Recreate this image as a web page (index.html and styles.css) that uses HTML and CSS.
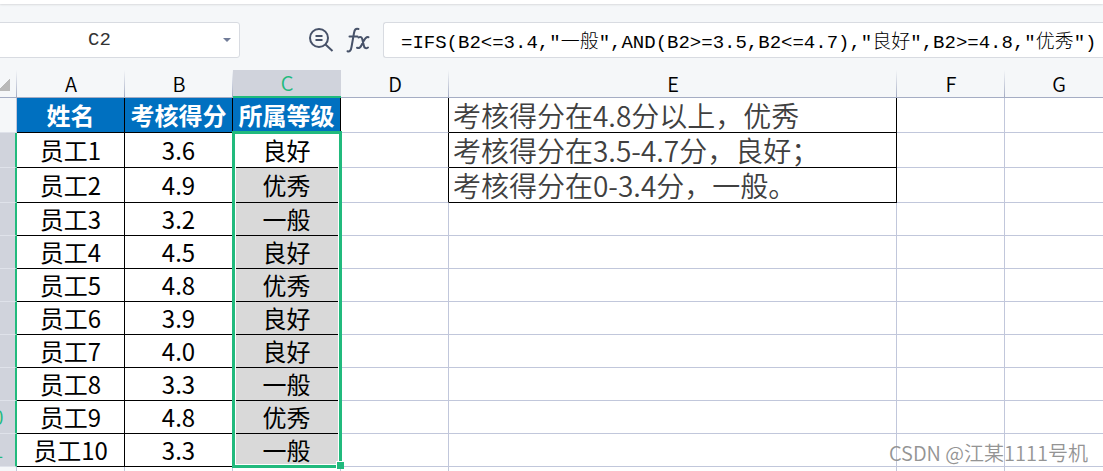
FILE: index.html
```html
<!DOCTYPE html>
<html lang="zh-CN">
<head>
  <meta charset="UTF-8">
  <meta name="viewport" content="width=device-width, initial-scale=1.0">
  <title>员工考核等级</title>
  <link rel="stylesheet" href="styles.css">
</head>
<body>
  <div class="ribbon"></div>

  <div class="formula-bar">
    <div class="name-box">
      <input type="text" value="C2" aria-label="名称框">
      <button type="button" aria-label="展开名称列表"><span class="arrow"></span></button>
    </div>
    <div class="tools">
      <button type="button" aria-label="查找">
        <svg width="26" height="26" viewBox="0 0 26 26" fill="none" stroke="#475269" stroke-width="2">
          <circle cx="11" cy="11" r="9"/>
          <path d="M7.500 9h7M7.500 13h7M17.500 17.500l7 6.500"/>
        </svg>
      </button>
      <button type="button" aria-label="插入函数">
        <svg width="24" height="26" viewBox="0 0 24 26" fill="none" stroke="#475269" stroke-width="2" stroke-linecap="round">
          <path d="M12.500 2C9.500 1 8.500 3 8 6L5.500 20C5 23.500 3.500 25 1.500 24.200M3.500 9.500h8"/>
          <path d="M12.500 10.500c2.500-1.500 3.500 0 4 2.500l1.200 5c.5 3 2 4 4.300 2.500M22.500 10.200c-2-.7-3.500 1-5 4l-2 4c-1.200 2.500-2.500 3.300-4.500 2.500"/>
        </svg>
      </button>
    </div>
    <input class="formula" type="text" aria-label="编辑栏" value='=IFS(B2&lt;=3.4,"一般",AND(B2&gt;=3.5,B2&lt;=4.7),"良好",B2&gt;=4.8,"优秀")'>
  </div>

  <div class="sheet">
    <table>
      <colgroup>
        <col class="col-num">
        <col class="col"><col class="col"><col class="col"><col class="col">
        <col class="col-wide">
        <col class="col"><col class="col">
        <col>
      </colgroup>
      <thead>
        <tr>
          <th class="corner"><span></span></th>
          <th>A</th><th>B</th><th class="active">C</th><th>D</th><th>E</th><th>F</th><th>G</th><th></th>
        </tr>
      </thead>
      <tbody>
        <tr class="tall">
          <th>1</th>
          <td class="title">姓名</td><td class="title">考核得分</td><td class="title">所属等级</td>
          <td class="before-note"></td><td class="note">考核得分在4.8分以上，优秀</td><td></td><td></td><td></td>
        </tr>
        <tr class="tall picked">
          <th>2</th>
          <td class="data">员工1</td><td class="data">3.6</td><td class="data current">良好<div class="selection"></div></td>
          <td class="before-note"></td><td class="note">考核得分在3.5-4.7分，良好；</td><td></td><td></td><td></td>
        </tr>
        <tr class="tall picked">
          <th>3</th>
          <td class="data">员工2</td><td class="data">4.9</td><td class="data level">优秀</td>
          <td class="before-note"></td><td class="note">考核得分在0-3.4分，一般。</td><td></td><td></td><td></td>
        </tr>
        <tr class="picked">
          <th>4</th>
          <td class="data">员工3</td><td class="data">3.2</td><td class="data level">一般</td>
          <td></td><td></td><td></td><td></td><td></td>
        </tr>
        <tr class="picked">
          <th>5</th>
          <td class="data">员工4</td><td class="data">4.5</td><td class="data level">良好</td>
          <td></td><td></td><td></td><td></td><td></td>
        </tr>
        <tr class="picked">
          <th>6</th>
          <td class="data">员工5</td><td class="data">4.8</td><td class="data level">优秀</td>
          <td></td><td></td><td></td><td></td><td></td>
        </tr>
        <tr class="picked">
          <th>7</th>
          <td class="data">员工6</td><td class="data">3.9</td><td class="data level">良好</td>
          <td></td><td></td><td></td><td></td><td></td>
        </tr>
        <tr class="picked">
          <th>8</th>
          <td class="data">员工7</td><td class="data">4.0</td><td class="data level">良好</td>
          <td></td><td></td><td></td><td></td><td></td>
        </tr>
        <tr class="picked">
          <th>9</th>
          <td class="data">员工8</td><td class="data">3.3</td><td class="data level">一般</td>
          <td></td><td></td><td></td><td></td><td></td>
        </tr>
        <tr class="picked">
          <th>10</th>
          <td class="data">员工9</td><td class="data">4.8</td><td class="data level">优秀</td>
          <td></td><td></td><td></td><td></td><td></td>
        </tr>
        <tr class="picked">
          <th>11</th>
          <td class="data">员工10</td><td class="data">3.3</td><td class="data level">一般</td>
          <td></td><td></td><td></td><td></td><td></td>
        </tr>
        <tr>
          <th></th>
          <td></td><td></td><td></td><td></td><td></td><td></td><td></td><td></td>
        </tr>
      </tbody>
    </table>
    <div class="watermark">CSDN @江某1111号机</div>
  </div>
</body>
</html>
```
FILE: styles.css
```css
* {
  box-sizing: border-box;
}

body {
  margin: 0;
  height: 100vh;
  display: flex;
  flex-direction: column;
  overflow: hidden;
  background: #f5f7f9;
  font-family: "Noto Sans CJK SC", sans-serif;
  color: #000;
}

button {
  border: 0;
  padding: 0;
  background: none;
}

input {
  border: 0;
  padding: 0;
  outline: 0;
  min-width: 0;
  background: none;
  font-family: "Liberation Mono", "Noto Sans CJK SC", monospace;
  font-size: 19px;
  font-weight: 300;
  color: #000;
}

.ribbon {
  flex: none;
  height: 4px;
  background: #fff;
  box-shadow: 0 1px 2px #d9dbde;
}

/* name box + formula input */
.formula-bar {
  flex: none;
  display: flex;
  align-items: center;
  height: 66px;
  padding-top: 6px;
}

.name-box {
  flex: none;
  display: flex;
  width: 281px;
  height: 36px;
  margin-left: -41px;
  background: #fff;
  border: 1px solid #d8dbe1;
  border-radius: 3px;
}

.name-box input {
  flex: 1;
  padding-left: 16px;
  text-align: center;
  color: #333;
}

.name-box button {
  width: 16px;
}

.arrow {
  display: block;
  width: 8px;
  border: 4px solid transparent;
  border-top-color: #717c98;
  border-bottom: 0;
}

.tools {
  flex: none;
  display: flex;
  justify-content: flex-end;
  gap: 12px;
  width: 143px;
  padding-right: 13px;
}

.tools svg {
  display: block;
}

.formula {
  flex: 1;
  height: 36px;
  padding-left: 17px;
  background: #fff;
  border: 1px solid #d8dbe1;
  border-right: 0;
  border-radius: 3px 0 0 3px;
}

/* grid, scrolled a little so the row numbers are cut off */
.sheet {
  flex: 1;
  min-height: 0;
  position: relative;
  overflow: hidden;
}

table {
  width: calc(100% + 32px);
  min-width: 1145px;
  margin-left: -32px;
  table-layout: fixed;
  border-collapse: separate;
  border-spacing: 0;
}

.col-num {
  width: 49px;
}

.col {
  width: 108px;
}

.col-wide {
  width: 448px;
}

th,
td {
  padding: 0;
  height: 33px;
  line-height: 30px;
  border-right: 1px solid #c1c7db;
  border-bottom: 1px solid #c1c7db;
  white-space: nowrap;
}

td {
  background: #fff;
}

th {
  font-size: 20px;
  font-weight: 350;
}

thead th {
  height: 28px;
  line-height: 26px;
  padding-top: 1px;
  border-right: 0;
  border-bottom-color: #a5adc4;
  background: linear-gradient(#f5f7f9, #a5adc4) right / 1px 100% no-repeat;
}

thead th.active {
  padding-top: 0;
  background: #d0d3dc;
  border-bottom: 2px solid #21ba7d;
  color: #21ba7d;
}

.corner span {
  display: block;
  width: 13px;
  height: 13px;
  margin-left: 29px;
  background: linear-gradient(135deg, transparent 50%, #b9b9b9 50%);
}

tbody th {
  padding-left: 2px;
  border-bottom-color: #dfe2ea;
}

.tall th,
.tall td {
  height: 35px;
  line-height: 32px;
}

.picked th {
  background: #d0d3dc;
  border-right: 2px solid #21ba7d;
  color: #21ba7d;
}

.title {
  background: #0070c0;
  border-color: #000;
  color: #fff;
  font-size: 24px;
  font-weight: 700;
  text-align: center;
}

.data {
  border-color: #000;
  font-size: 24px;
  text-align: center;
}

.level {
  background: #d9d9d9;
}

.current {
  position: relative;
}

/* covers C2:C11, two tall rows and eight normal ones */
.selection {
  position: absolute;
  top: -2px;
  left: -1px;
  width: 110px;
  height: calc(35px * 2 + 33px * 8 + 3px);
  border: 3px solid #21ba7d;
  box-shadow: inset 0 0 0 1px #fff;
}

.selection::after {
  content: "";
  position: absolute;
  right: -5px;
  bottom: -4px;
  width: 7px;
  height: 7px;
  background: #21ba7d;
  border: 1px solid #fff;
  border-right: 0;
  border-bottom: 0;
}

.before-note {
  border-right-color: #000;
}

.note {
  padding-left: 4px;
  border-color: #000;
  color: #404040;
  font-size: 28px;
  font-weight: 350;
}

.watermark {
  position: absolute;
  right: 15px;
  bottom: 4px;
  font-size: 20px;
  line-height: 28px;
  font-weight: 350;
  color: #949494;
}
```
